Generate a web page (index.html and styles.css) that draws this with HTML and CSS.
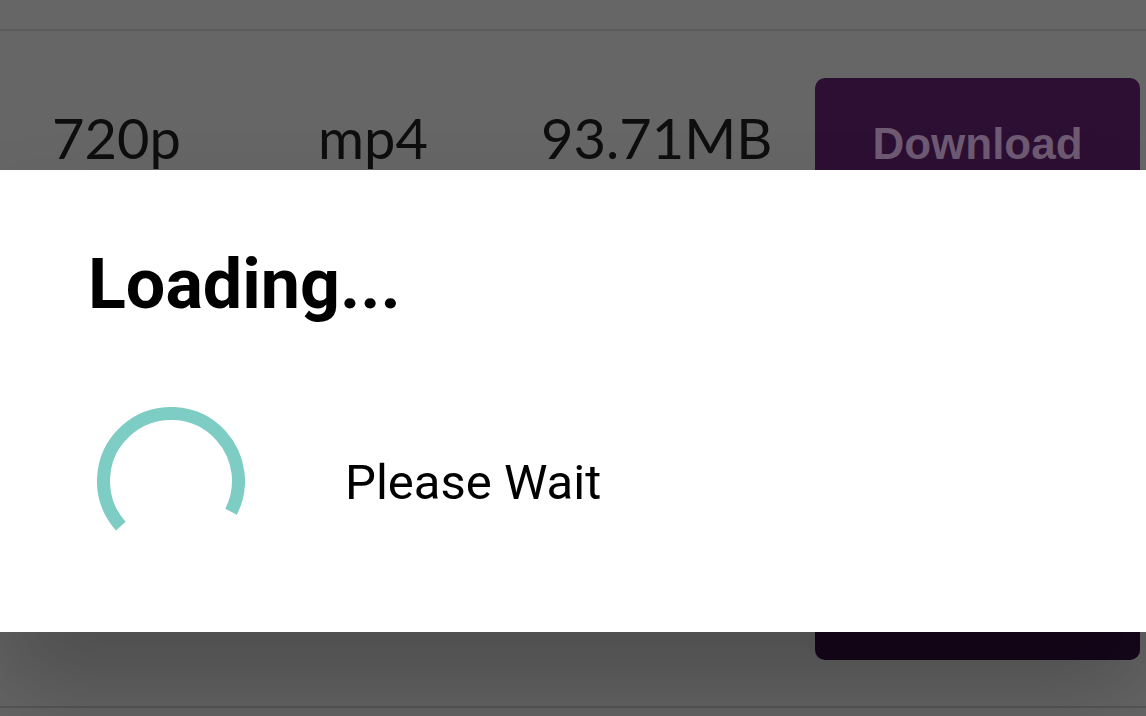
FILE: index.html
```html
<!DOCTYPE html>
<html lang="en">
<head>
    <meta charset="UTF-8">
    <meta name="viewport" content="width=device-width, initial-scale=1.0">
    <title>Downloads</title>
    <link rel="stylesheet" href="styles.css">
</head>
<body>
    <div class="page">
        <div class="row-top"></div>
        <div class="file-row">
            <div class="cell">720p</div>
            <div class="cell">mp4</div>
            <div class="cell">93.71MB</div>
            <a class="btn">Download</a>
        </div>
        <div class="row-next"></div>
    </div>

    <div class="modal">
        <h2 class="modal-title">Loading...</h2>
        <div class="modal-body">
            <svg class="spinner" width="148" height="148" viewBox="0 0 148 148">
                <circle cx="74" cy="74" r="67.5" fill="none" stroke="#7ecdc4" stroke-width="13"
                        stroke-dasharray="293 424" transform="rotate(138 74 74)"/>
            </svg>
            <div class="wait">Please Wait</div>
        </div>
    </div>
</body>
</html>
```

FILE: styles.css
```css
body {
    margin: 0;
    background-color: #666666;
    font-family: 'Lato', 'Liberation Sans', sans-serif;
    overflow: hidden;
}

.row-top {
    height: 29px;
    border-bottom: 2px solid #5a5a5a;
}

.file-row {
    display: grid;
    grid-template-columns: 266px 223px 274px 325px;
    align-items: baseline;
    padding-left: 52px;
    margin-top: 47px;
}

.cell {
    font-size: 56px;
    color: #0e0e0e;
    line-height: 1.2;
}

.btn {
    display: block;
    height: 582px;
    box-sizing: border-box;
    padding-top: 40px;
    border-radius: 10px;
    background: linear-gradient(#2c0f33 16%, #16071c 95%);
    color: #6e5a72;
    font-family: 'Liberation Sans', Arial, sans-serif;
    font-weight: bold;
    font-size: 44px;
    line-height: 52px;
    text-align: center;
}

.row-next {
    margin-top: 46px;
    height: 40px;
    border-top: 2px solid #575757;
}

/* loading dialog on top of the list */
.modal {
    position: fixed;
    top: 170px;
    left: 0;
    right: 0;
    height: 462px;
    box-sizing: border-box;
    padding: 72px 0 0 88px;
    background-color: #ffffff;
    box-shadow: 0 60px 90px rgba(0, 0, 0, 0.24);
    font-family: 'Roboto', 'Liberation Sans', sans-serif;
    color: #000;
}

.modal-title {
    margin: 0;
    font-size: 70px;
    font-weight: 700;
    line-height: 1.2;
}

.modal-body {
    display: flex;
    align-items: center;
    gap: 100px;
    margin-top: 81px;
    padding-left: 9px;
}

.spinner {
    display: block;
}

.wait {
    font-size: 49px;
    line-height: 1.2;
    padding-top: 4px;
}
```
